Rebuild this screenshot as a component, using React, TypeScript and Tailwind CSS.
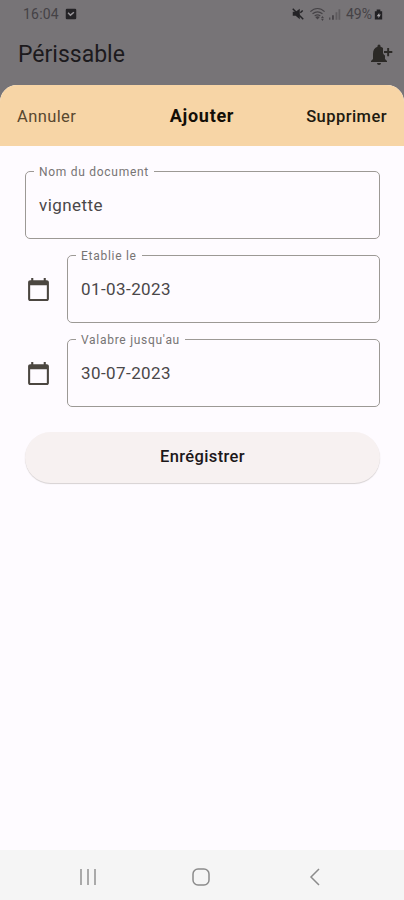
import { ReactNode } from "react";
import { MdCalendarToday } from "react-icons/md";

interface FieldProps {
    label: string;
    value: string;
}

const Field = ({ label, value }: FieldProps) => (
    <fieldset className="h-[74px] min-w-0 flex-1 rounded-[5px] border border-[#9c9995] pl-2">
        <legend className="h-[13px] px-[5px] pt-px text-[12px] leading-[13px] tracking-[0.72px] text-[#777474]">
            {label}
        </legend>
        <p className="pt-[15px] pl-[5px] text-[17px] leading-6 tracking-[0.42px] text-[#4a4749]">
            {value}
        </p>
    </fieldset>
);

const DateRow = ({ label, value }: FieldProps) => (
    <div className="flex">
        <div className="flex w-[42px] items-center pt-[6px] pl-px">
            <MdCalendarToday className="size-[25px] text-[#4b4640]" />
        </div>
        <Field label={label} value={value} />
    </div>
);

const StatusIcon = ({ className, children }: { className: string; children: ReactNode }) => (
    <svg viewBox="0 0 24 24" fill="currentColor" className={className}>
        {children}
    </svg>
);

export default function App() {
    return (
        <div className="flex h-[900px] w-[404px] flex-col overflow-hidden bg-[#777477] font-['Roboto',sans-serif]">
            {/* Status bar */}
            <div className="flex h-7 items-center pr-[20px] pl-[23px] text-[14px] text-[#454246]">
                <span className="tracking-[0.2px]">16:04</span>
                <StatusIcon className="ml-[5px] size-[14px] text-[#242326]">
                    <path d="M5 3h14a2 2 0 0 1 2 2v14a2 2 0 0 1-2 2H5a2 2 0 0 1-2-2V5a2 2 0 0 1 2-2Z" />
                    <path d="m7 10 4 4 6-5" fill="none" stroke="#99969a" strokeWidth="2.5" />
                </StatusIcon>
                <StatusIcon className="ml-auto size-[14px] text-[#242326]">
                    <path d="M3 8v7h5l7 6V3L8 8H3Z" />
                    <path d="m3 3 18 18M16 10l4-4" fill="none" stroke="currentColor" strokeWidth="2.5" />
                </StatusIcon>
                <StatusIcon className="ml-[4px] size-[17px]">
                    <path d="M2 8c6-6 14-6 20 0M5 11c5-4 9-4 14 0M8 14c3-2 5-2 8 0" fill="none" stroke="currentColor" strokeWidth="1.7" />
                    <path d="m12 19-3-3c2-2 4-2 6 0l-3 3Zm7-5 2 3h-4l2-3Zm0 7-2-3h4l-2 3Z" />
                </StatusIcon>
                <StatusIcon className="ml-[2px] size-[14px]">
                    <path d="M2 18h2v4H2zM7 14h3v8H7z" />
                    <path d="M13 9h3v13h-3zM18 4h3v18h-3z" opacity=".5" />
                </StatusIcon>
                <span className="ml-[4px]">49%</span>
                <StatusIcon className="ml-px h-[13px] w-[11px] text-[#222124]">
                    <path d="M8 1h8v4h4v18H4V5h4V1Z" />
                    <path d="m14 8-6 8h4v4l5-8h-4l1-4Z" fill="#aaa7ab" />
                </StatusIcon>
            </div>

            {/* App bar */}
            <div className="flex h-[57px] items-start justify-between pt-[11px] pr-[10px] pl-[18px]">
                <h1 className="text-[23px] leading-[31px] text-[#1c1a1d]">Périssable</h1>
                <svg viewBox="0 0 24 24" className="mt-[3px] size-6 text-[#2b2926]" fill="currentColor">
                    <path d="M7 21h4a2 2 0 0 1-4 0Z" />
                    <path d="M1 20v-1l2-2v-5c0-4 1.5-6.5 4.5-7.3V4a1.5 1.5 0 0 1 3 0v.7c1 .2 1.7.6 2.5 1.2v4.6c0 1.3 1 2.5 2 3V17l2 2v1H1Z" />
                    <path d="M17.2 6h1.9v3.1h3.2V11h-3.2v3.2h-1.9V11H14V9.1h3.2V6Z" />
                </svg>
            </div>

            {/* Bottom sheet */}
            <main className="flex flex-1 flex-col overflow-hidden rounded-t-[17px] bg-[#fefbff]">
                <header className="grid h-[61px] grid-cols-[1fr_auto_1fr] items-center bg-[#f7d5a6] px-[17px] text-[16.5px] text-[#211a10]">
                    <button className="justify-self-start pt-[3px] tracking-[0.4px] text-[#59482f]">Annuler</button>
                    <h2 className="text-[18px] font-bold tracking-[0.7px] text-[#130e06]">Ajouter</h2>
                    <button className="justify-self-end pt-[3px] font-medium tracking-[0.45px]">Supprimer</button>
                </header>

                <div className="flex flex-col gap-[10px] px-6 pt-[19px] pl-[25px]">
                    <div className="flex">
                        <Field label="Nom du document" value="vignette" />
                    </div>
                    <DateRow label="Etablie le" value="01-03-2023" />
                    <DateRow label="Valabre jusqu'au" value="30-07-2023" />
                    <button className="mt-[15px] h-[51px] rounded-full bg-[#f7f1f1] text-[16.5px] font-medium tracking-[0.35px] text-[#1c181a] shadow-[0_1px_1px_#d6d1d2]">
                        Enrégistrer
                    </button>
                </div>
            </main>

            {/* System navigation */}
            <nav className="flex h-[50px] items-center bg-[#f5f5f5] pt-[3px] pl-[79px] text-[#8b8b8b]">
                <svg viewBox="0 0 18 18" className="size-[18px]" fill="none" stroke="currentColor" strokeWidth="1.4">
                    <path d="M2 1v16M9 1v16M16 1v16" />
                </svg>
                <svg viewBox="0 0 18 18" className="ml-[95px] size-[18px]" fill="none" stroke="currentColor" strokeWidth="1.5">
                    <rect x="1" y="1" width="16" height="16" rx="5" />
                </svg>
                <svg viewBox="0 0 18 18" className="ml-[96px] size-[18px]" fill="none" stroke="currentColor" strokeWidth="1.5">
                    <path d="m13 1-8 8 8 8" />
                </svg>
            </nav>
        </div>
    );
}
